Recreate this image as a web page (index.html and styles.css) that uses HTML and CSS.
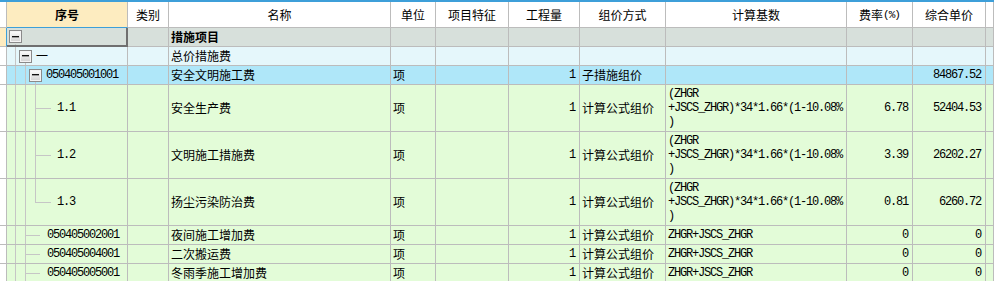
FILE: index.html
```html
<!DOCTYPE html>
<html lang="zh">
<head>
<meta charset="utf-8">
<title>措施项目</title>
<link rel="stylesheet" href="styles.css">
</head>
<body>
<div class="topbar"></div>
<div class="sheet">
  <div class="row head">
    <div class="c c0"></div>
    <div class="c seqh">序号</div>
    <div class="c">类别</div>
    <div class="c">名称</div>
    <div class="c">单位</div>
    <div class="c">项目特征</div>
    <div class="c">工程量</div>
    <div class="c">组价方式</div>
    <div class="c">计算基数</div>
    <div class="c">费率<span class="pct">(%)</span></div>
    <div class="c">综合单价</div>
    <div class="c"></div>
  </div>

  <div class="row r-top">
    <div class="c c0 c0sel"></div>
    <div class="c seq focus t1"><span class="tg"></span></div>
    <div class="c"></div>
    <div class="c b">措施项目</div>
    <div class="c"></div><div class="c"></div><div class="c"></div><div class="c"></div>
    <div class="c"></div><div class="c"></div><div class="c"></div><div class="c"></div>
  </div>

  <div class="row r-sec">
    <div class="c c0"></div>
    <div class="c seq t2 lv2"><span class="tg"></span><span class="lbl">一</span></div>
    <div class="c"></div>
    <div class="c">总价措施费</div>
    <div class="c"></div><div class="c"></div><div class="c"></div><div class="c"></div>
    <div class="c"></div><div class="c"></div><div class="c"></div><div class="c"></div>
  </div>

  <div class="row r-sel">
    <div class="c c0"></div>
    <div class="c seq t3 lv3"><span class="tg"></span><span class="mono lbl">050405001001</span></div>
    <div class="c"></div>
    <div class="c">安全文明施工费</div>
    <div class="c">项</div>
    <div class="c"></div>
    <div class="c num">1</div>
    <div class="c">子措施组价</div>
    <div class="c"></div>
    <div class="c"></div>
    <div class="c num">84867.52</div>
    <div class="c"></div>
  </div>

  <div class="row r-tall">
    <div class="c c0"></div>
    <div class="c seq tleaf lv4 mono">1.1</div>
    <div class="c"></div>
    <div class="c">安全生产费</div>
    <div class="c">项</div>
    <div class="c"></div>
    <div class="c num">1</div>
    <div class="c">计算公式组价</div>
    <div class="c fx">(ZHGR<br>+JSCS_ZHGR)*34*1.66*(1-10.08%<br>)</div>
    <div class="c num">6.78</div>
    <div class="c num">52404.53</div>
    <div class="c"></div>
  </div>

  <div class="row r-tall">
    <div class="c c0"></div>
    <div class="c seq tleaf lv4 mono">1.2</div>
    <div class="c"></div>
    <div class="c">文明施工措施费</div>
    <div class="c">项</div>
    <div class="c"></div>
    <div class="c num">1</div>
    <div class="c">计算公式组价</div>
    <div class="c fx">(ZHGR<br>+JSCS_ZHGR)*34*1.66*(1-10.08%<br>)</div>
    <div class="c num">3.39</div>
    <div class="c num">26202.27</div>
    <div class="c"></div>
  </div>

  <div class="row r-tall">
    <div class="c c0"></div>
    <div class="c seq tend lv4 mono">1.3</div>
    <div class="c"></div>
    <div class="c">扬尘污染防治费</div>
    <div class="c">项</div>
    <div class="c"></div>
    <div class="c num">1</div>
    <div class="c">计算公式组价</div>
    <div class="c fx">(ZHGR<br>+JSCS_ZHGR)*34*1.66*(1-10.08%<br>)</div>
    <div class="c num">0.81</div>
    <div class="c num">6260.72</div>
    <div class="c"></div>
  </div>

  <div class="row r-item">
    <div class="c c0"></div>
    <div class="c seq tsib lv3b mono">050405002001</div>
    <div class="c"></div>
    <div class="c">夜间施工增加费</div>
    <div class="c">项</div>
    <div class="c"></div>
    <div class="c num">1</div>
    <div class="c">计算公式组价</div>
    <div class="c mono">ZHGR+JSCS_ZHGR</div>
    <div class="c num">0</div>
    <div class="c num">0</div>
    <div class="c"></div>
  </div>

  <div class="row r-item">
    <div class="c c0"></div>
    <div class="c seq tsib lv3b mono">050405004001</div>
    <div class="c"></div>
    <div class="c">二次搬运费</div>
    <div class="c">项</div>
    <div class="c"></div>
    <div class="c num">1</div>
    <div class="c">计算公式组价</div>
    <div class="c mono">ZHGR+JSCS_ZHGR</div>
    <div class="c num">0</div>
    <div class="c num">0</div>
    <div class="c"></div>
  </div>

  <div class="row r-item">
    <div class="c c0"></div>
    <div class="c seq tsib lv3b mono">050405005001</div>
    <div class="c"></div>
    <div class="c">冬雨季施工增加费</div>
    <div class="c">项</div>
    <div class="c"></div>
    <div class="c num">1</div>
    <div class="c">计算公式组价</div>
    <div class="c mono">ZHGR+JSCS_ZHGR</div>
    <div class="c num">0</div>
    <div class="c num">0</div>
    <div class="c"></div>
  </div>
</div>
</body>
</html>
```
FILE: styles.css
```css
html, body {
  margin: 0;
  padding: 0;
  background: #ffffff;
  overflow: hidden;
}
body {
  width: 994px;
  height: 281px;
  font-family: "Noto Sans CJK SC", "Noto Sans", sans-serif;
  font-size: 12px;
  color: #000;
}
.topbar {
  height: 2px;
  background: #3d9fd9;
}
.sheet {
  width: 994px;
}
.row {
  display: grid;
  grid-template-columns: 7px 121px 41px 222px 45px 73px 71px 86px 181px 66px 73px 8px;
}
.c {
  box-sizing: border-box;
  border-right: 1px solid #bcbcbc;
  border-bottom: 1px solid #bcbcbc;
  display: flex;
  align-items: center;
  padding: 0 2px;
  white-space: nowrap;
  overflow: hidden;
  line-height: 14px;
}
.c0 {
  background: #ffffff;
  padding: 0;
}
.head { height: 26px; background: #ffffff; }
.head .c { justify-content: center; padding: 0; }
.seqh {
  background: #fdecc0;
  font-weight: bold;
  border-bottom-color: #3d9fd9;
}
.pct {
  font-family: "Liberation Mono", monospace;
  font-size: 11px;
  letter-spacing: -1px;
}

.r-top { height: 19px; background: #d7e0db; }
.r-sec { height: 19px; background: #e5f7fb; }
.r-sel { height: 19px; background: #afe7f9; }
.r-tall { height: 47px; background: #e3fcd8; }
.r-item { height: 19px; background: #e3fcd8; }

.c0sel {
  background: #fdecc0;
  border-right-color: #3d9fd9;
}
.focus {
  border-right: 2px solid #6f6f6f;
  border-bottom: 2px solid #6f6f6f;
}
.b { font-weight: bold; }

.mono,
.num,
.fx {
  font-family: "Liberation Mono", "DejaVu Sans Mono", monospace;
  font-size: 12px;
  letter-spacing: -1.2px;
}
.num {
  justify-content: flex-end;
  padding-right: 4px;
}
.fx {
  display: block;
  padding-top: 2px;
  white-space: nowrap;
}

/* tree column */
.seq {
  --g: linear-gradient(#c6c6c6, #c6c6c6);
  background-repeat: no-repeat;
  padding-left: 2px;
}
.lv2 { padding-left: 12px; }
.lv3 { padding-left: 22px; }
.lv3b { padding-left: 40px; }
.lv4 { padding-left: 50px; }
.lbl { margin-left: 4px; }

.t1 {
  background-image: var(--g);
  background-position: 8px 16px;
  background-size: 1px 100%;
}
.t2 {
  background-image: var(--g), var(--g);
  background-position: 8px 0, 18px 15px;
  background-size: 1px 100%, 1px 100%;
}
.t3 {
  background-image: var(--g), var(--g), var(--g);
  background-position: 8px 0, 18px 0, 28px 15px;
  background-size: 1px 100%, 1px 100%, 1px 100%;
}
.tleaf {
  background-image: var(--g), var(--g), var(--g), var(--g);
  background-position: 8px 0, 18px 0, 28px 0, 28px 50%;
  background-size: 1px 100%, 1px 100%, 1px 100%, 16px 1px;
}
.tend {
  background-image: var(--g), var(--g), var(--g), var(--g);
  background-position: 8px 0, 18px 0, 28px 0, 28px 50%;
  background-size: 1px 100%, 1px 100%, 1px 50%, 16px 1px;
}
.tsib {
  background-image: var(--g), var(--g), var(--g);
  background-position: 8px 0, 18px 0, 19px 50%;
  background-size: 1px 100%, 1px 100%, 14px 1px;
}

.tg {
  width: 13px;
  height: 13px;
  box-sizing: border-box;
  border: 1px solid #8a8a8a;
  background: linear-gradient(#fefefe, #d2d2d2);
  box-shadow: inset 0 0 0 1px #f4f4f4;
  display: flex;
  align-items: center;
  justify-content: center;
  flex: none;
}
.tg::after {
  content: "";
  width: 7px;
  height: 1px;
  background: #111;
  border-bottom: 1px solid #9a9a9a;
}
```
